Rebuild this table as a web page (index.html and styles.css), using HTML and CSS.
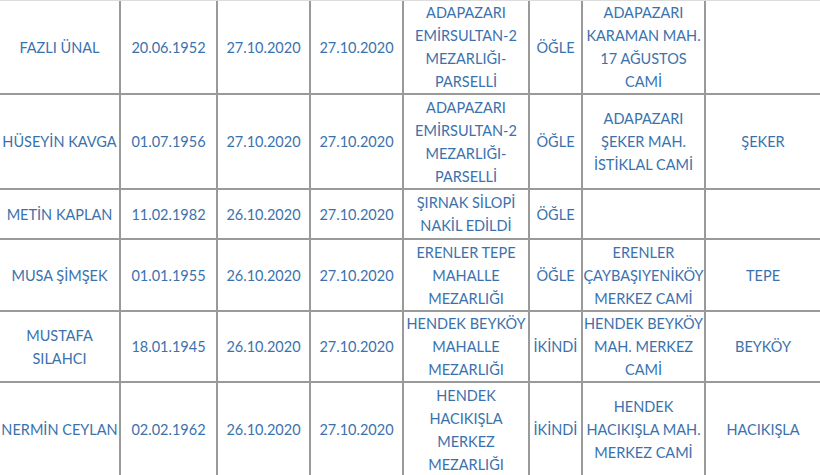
FILE: index.html
```html
<!DOCTYPE html>
<html lang="tr">
<head>
<meta charset="utf-8">
<title>Cenaze Listesi</title>
<link rel="stylesheet" href="styles.css">
</head>
<body>
<table class="list">
  <colgroup>
    <col class="c1"><col class="c2"><col class="c3"><col class="c4"><col class="c5"><col class="c6"><col class="c7"><col class="c8">
  </colgroup>
  <tbody>
    <tr class="r1">
      <td>FAZLI ÜNAL</td>
      <td>20.06.1952</td>
      <td>27.10.2020</td>
      <td>27.10.2020</td>
      <td>ADAPAZARI<br>EMİRSULTAN-2<br>MEZARLIĞI-<br>PARSELLİ</td>
      <td>ÖĞLE</td>
      <td>ADAPAZARI<br>KARAMAN MAH.<br>17 AĞUSTOS<br>CAMİ</td>
      <td></td>
    </tr>
    <tr class="r2">
      <td>HÜSEYİN KAVGA</td>
      <td>01.07.1956</td>
      <td>27.10.2020</td>
      <td>27.10.2020</td>
      <td>ADAPAZARI<br>EMİRSULTAN-2<br>MEZARLIĞI-<br>PARSELLİ</td>
      <td>ÖĞLE</td>
      <td>ADAPAZARI<br>ŞEKER MAH.<br>İSTİKLAL CAMİ</td>
      <td>ŞEKER</td>
    </tr>
    <tr class="r3">
      <td>METİN KAPLAN</td>
      <td>11.02.1982</td>
      <td>26.10.2020</td>
      <td>27.10.2020</td>
      <td>ŞIRNAK SİLOPİ<br>NAKİL EDİLDİ</td>
      <td>ÖĞLE</td>
      <td></td>
      <td></td>
    </tr>
    <tr class="r4">
      <td>MUSA ŞİMŞEK</td>
      <td>01.01.1955</td>
      <td>26.10.2020</td>
      <td>27.10.2020</td>
      <td>ERENLER TEPE<br>MAHALLE<br>MEZARLIĞI</td>
      <td>ÖĞLE</td>
      <td>ERENLER<br>ÇAYBAŞIYENİKÖY<br>MERKEZ CAMİ</td>
      <td>TEPE</td>
    </tr>
    <tr class="r5">
      <td>MUSTAFA<br>SILAHCI</td>
      <td>18.01.1945</td>
      <td>26.10.2020</td>
      <td>27.10.2020</td>
      <td>HENDEK BEYKÖY<br>MAHALLE<br>MEZARLIĞI</td>
      <td>İKİNDİ</td>
      <td>HENDEK BEYKÖY<br>MAH. MERKEZ<br>CAMİ</td>
      <td>BEYKÖY</td>
    </tr>
    <tr class="r6">
      <td>NERMİN CEYLAN</td>
      <td>02.02.1962</td>
      <td>26.10.2020</td>
      <td>27.10.2020</td>
      <td>HENDEK<br>HACIKIŞLA<br>MERKEZ<br>MEZARLIĞI</td>
      <td>İKİNDİ</td>
      <td>HENDEK<br>HACIKIŞLA MAH.<br>MERKEZ CAMİ</td>
      <td>HACIKIŞLA</td>
    </tr>
  </tbody>
</table>
</body>
</html>
```

FILE: styles.css
```css
html, body {
  margin: 0;
  padding: 0;
  background: #ffffff;
}

body {
  font-family: Lato, "Open Sans", "DejaVu Sans", sans-serif;
  font-size: 14.5px;
  color: #3a72ad;
  overflow: hidden;
}

.list {
  width: 820px;
  table-layout: fixed;
  border-collapse: separate;
  border-spacing: 0;
  border-top: 1px solid #dcdcdc;
}

.c1 { width: 121px; }
.c2 { width: 97px; }
.c3 { width: 93px; }
.c4 { width: 93px; }
.c5 { width: 126px; }
.c6 { width: 53px; }
.c7 { width: 123px; }
.c8 { width: 114px; }

.list td {
  box-sizing: border-box;
  padding: 0;
  border-right: 2px solid #9a9a9a;
  border-bottom: 2px solid #9a9a9a;
  text-align: center;
  vertical-align: middle;
  line-height: 23px;
  white-space: nowrap;
  overflow: visible;
}

.list td:last-child {
  border-right: none;
}

.r1 { height: 94px; }
.r2 { height: 95px; }
.r3 { height: 50px; }
.r4 { height: 72px; }
.r5 { height: 71px; }
.r6 { height: 95px; }
```
